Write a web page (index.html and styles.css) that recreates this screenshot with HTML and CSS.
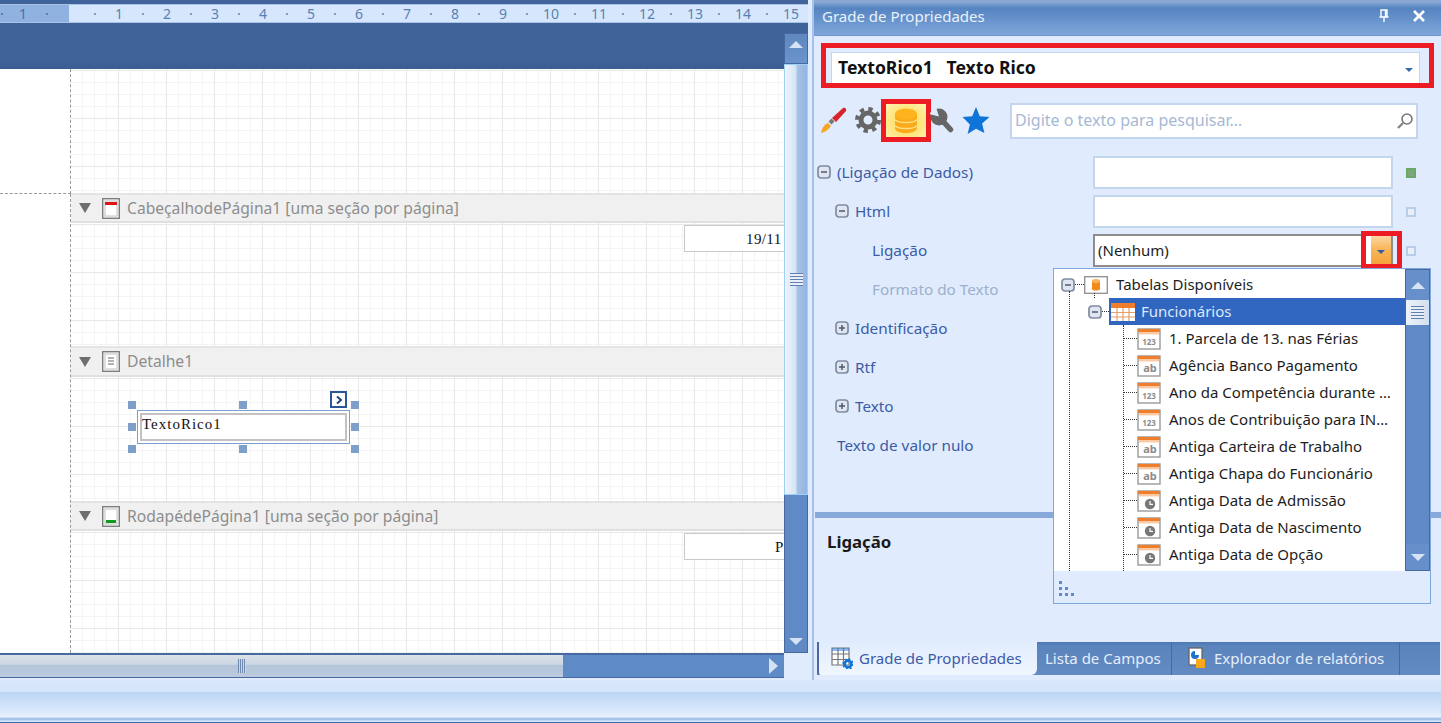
FILE: index.html
```html
<!DOCTYPE html>
<html lang="pt-BR">
<head>
<meta charset="utf-8">
<title>Grade de Propriedades</title>
<link rel="stylesheet" href="styles.css">
</head>
<body>
<svg class="defs" width="0" height="0" aria-hidden="true">
  <defs>
    <symbol id="field-base" viewBox="0 0 24 22">
      <rect x="1" y="1" width="22" height="20" fill="#fff" stroke="#9a9a9a" stroke-width="1.4"/>
      <rect x="1" y="1" width="22" height="3" fill="#ef7f2c"/>
      <rect x="2" y="4" width="20" height="2.4" fill="#f8c9a2"/>
    </symbol>
    <symbol id="field-clock" viewBox="0 0 24 22">
      <use href="#field-base" width="24" height="22"/>
      <circle cx="13" cy="14" r="5.2" fill="#777"/>
      <path d="M13 11v3.3h3" fill="none" stroke="#fff" stroke-width="1.2"/>
    </symbol>
    <symbol id="expander-minus" viewBox="0 0 14 14">
      <rect x="1" y="1" width="12" height="12" rx="3" fill="#dfe6f1" stroke="#7f8ca3" stroke-width="1.7"/>
      <path d="M4 7h6" stroke="#4f5a6e" stroke-width="1.5"/>
    </symbol>
    <symbol id="expander-plus" viewBox="0 0 14 14">
      <rect x="1" y="1" width="12" height="12" rx="3" fill="#dfe6f1" stroke="#7f8ca3" stroke-width="1.7"/>
      <path d="M4 7h6M7 4v6" stroke="#4f5a6e" stroke-width="1.5"/>
    </symbol>
  </defs>
</svg>

<div class="app">
  <div class="workspace">
    <section class="designer">
      <div class="top-strip"></div>
      <div class="ruler">
        <span class="ruler-cell neg ruler-first">·</span><span class="ruler-cell neg">1</span><span class="ruler-cell neg">·</span><span class="ruler-cell"></span>
        <span class="ruler-cell">·</span><span class="ruler-cell">1</span><span class="ruler-cell">·</span><span class="ruler-cell">2</span>
        <span class="ruler-cell">·</span><span class="ruler-cell">3</span><span class="ruler-cell">·</span><span class="ruler-cell">4</span>
        <span class="ruler-cell">·</span><span class="ruler-cell">5</span><span class="ruler-cell">·</span><span class="ruler-cell">6</span>
        <span class="ruler-cell">·</span><span class="ruler-cell">7</span><span class="ruler-cell">·</span><span class="ruler-cell">8</span>
        <span class="ruler-cell">·</span><span class="ruler-cell">9</span><span class="ruler-cell">·</span><span class="ruler-cell">10</span>
        <span class="ruler-cell">·</span><span class="ruler-cell">11</span><span class="ruler-cell">·</span><span class="ruler-cell">12</span>
        <span class="ruler-cell">·</span><span class="ruler-cell">13</span><span class="ruler-cell">·</span><span class="ruler-cell">14</span>
        <span class="ruler-cell">·</span><span class="ruler-cell">15</span>
      </div>
      <div class="designer-body">
        <div class="designer-main">
          <div class="page-band"></div>
          <div class="canvas">
            <div class="margin">
              <div class="margin-top"></div>
              <div class="margin-rest"></div>
            </div>
            <div class="sections">
              <div class="grid grid-top"></div>
              <div class="band">
                <span class="tri"></span>
                <svg class="band-icon" viewBox="0 0 18 21"><rect x=".7" y=".7" width="16.6" height="19.6" fill="#f4f4f4" stroke="#777" stroke-width="1.3"/><rect x="3" y="3" width="12" height="15" fill="#fff" stroke="#c4c4c4"/><rect x="3" y="4" width="12" height="3" fill="#d9161c"/></svg>
                <span class="band-title">CabeçalhodePágina1 [uma seção por página]</span>
              </div>
              <div class="grid grid-side">
                <div class="label-box">19/11</div>
              </div>
              <div class="band band-tall">
                <span class="tri"></span>
                <svg class="band-icon" viewBox="0 0 18 21"><rect x=".7" y=".7" width="16.6" height="19.6" fill="#f4f4f4" stroke="#777" stroke-width="1.3"/><rect x="3" y="3" width="12" height="15" fill="#fff" stroke="#c4c4c4"/><path d="M6 7h6M6 10h6M6 13h6" stroke="#666"/></svg>
                <span class="band-title">Detalhe1</span>
              </div>
              <div class="grid grid-detail">
                <div class="control">
                  <div class="control-inner">TextoRico1</div>
                  <span class="handle h-tl"></span><span class="handle h-tc"></span><span class="handle h-tr"></span>
                  <span class="handle h-ml"></span><span class="handle h-mr"></span>
                  <span class="handle h-bl"></span><span class="handle h-bc"></span><span class="handle h-br"></span>
                  <span class="smart-tag"><svg viewBox="0 0 10 10" width="10" height="10"><path d="M3 1.5 7 5 3 8.500" fill="none" stroke="#23457f" stroke-width="2"/></svg></span>
                </div>
              </div>
              <div class="band">
                <span class="tri"></span>
                <svg class="band-icon" viewBox="0 0 18 21"><rect x=".7" y=".7" width="16.6" height="19.6" fill="#f4f4f4" stroke="#777" stroke-width="1.3"/><rect x="3" y="3" width="12" height="15" fill="#fff" stroke="#c4c4c4"/><rect x="4" y="14" width="10" height="3" fill="#0e9a1c"/></svg>
                <span class="band-title">RodapédePágina1 [uma seção por página]</span>
              </div>
              <div class="grid grid-foot">
                <div class="label-box label-foot">P</div>
              </div>
            </div>
          </div>
          <div class="hscroll">
            <div class="hthumb"><span class="grip-v"></span></div>
            <div class="htrack"><span class="arrow-right"></span></div>
          </div>
        </div>
        <div class="vscroll">
          <div class="vscroll-cap"></div>
          <div class="vbtn vbtn-up"><span class="arrow-up"></span></div>
          <div class="vthumb"><span class="grip-h"></span></div>
          <div class="vtrack"></div>
          <div class="vbtn vbtn-down"><span class="arrow-down"></span></div>
          <div class="vcorner"></div>
        </div>
      </div>
    </section>

    <aside class="panel">
      <header class="panel-title">
        <span class="panel-name">Grade de Propriedades</span>
        <svg class="pin" viewBox="0 0 12 14" width="12" height="14"><path d="M3 1h6v7H3zM1.500 8h9M6 8v5M7.500 1v7" fill="none" stroke="#fff" stroke-width="1.400"/></svg>
        <svg class="close" viewBox="0 0 14 12" width="14" height="12"><path d="M2 1l10 10M12 1 2 11" fill="none" stroke="#fff" stroke-width="2.600"/></svg>
      </header>

      <div class="object-red">
        <div class="object-combo">
          <span class="object-text">TextoRico1&nbsp;&nbsp; Texto Rico</span>
          <span class="combo-arrow"></span>
        </div>
      </div>

      <div class="toolbar">
        <svg class="tool tool-brush" viewBox="0 0 28 28" width="28" height="28"><path d="M1 27c1-6 4-9 7-10l3 3c-2 3-5 6-10 7z" fill="#f5a623"/><path d="M8.500 15.500l3 3 3-3-3-3z" fill="#777"/><path d="M12 12 23 2c2-1 4 1 3 3L16 16z" fill="#d8232a"/></svg>
        <svg class="tool tool-gear" viewBox="0 0 26 26" width="26" height="26"><circle cx="13" cy="13" r="7" fill="none" stroke="#666" stroke-width="5"/><circle cx="13" cy="13" r="11" fill="none" stroke="#666" stroke-width="4" stroke-dasharray="4.300 4.340"/></svg>
        <div class="tool-db">
          <svg viewBox="0 0 24 26" width="24" height="26"><path d="M1 6v14c0 3 5 5 11 5s11-2 11-5V6z" fill="#fbab18"/><ellipse cx="12" cy="6" rx="11" ry="5.500" fill="#ffb31c"/><path d="M1 11.500c2 4 20 4 22 0M1 17.500c2 4 20 4 22 0" fill="none" stroke="#ffe08a" stroke-width="1.600"/></svg>
        </div>
        <svg class="tool tool-wrench" viewBox="0 0 24 25" width="24" height="25"><circle cx="9" cy="9" r="8.500" fill="#666"/><path d="M9 9 20.500 21.500" stroke="#666" stroke-width="5.500" stroke-linecap="round"/><path d="M9 8.500-1 6 6-1z" fill="#e0ecfd"/></svg>
        <svg class="tool tool-star" viewBox="0 0 28 28" width="28" height="28"><path d="M14 1l3.800 9.200 9.700.8-7.400 6.400 2.300 9.600L14 22.800 5.600 28l2.300-9.600L.5 11l9.700-.8z" fill="#0f74d8"/></svg>
        <div class="search">
          <span class="search-hint">Digite o texto para pesquisar…</span>
          <svg viewBox="0 0 18 18" width="18" height="18"><circle cx="11" cy="7" r="5" fill="#fff" stroke="#777" stroke-width="1.600"/><path d="M7 11 2 16" stroke="#888" stroke-width="2.400"/></svg>
        </div>
      </div>

      <div class="props">
        <div class="prop">
          <div class="prop-label"><svg class="exp"><use href="#expander-minus"/></svg>(Ligação de Dados)</div>
          <div class="prop-value"></div>
          <span class="marker marker-on"></span>
        </div>
        <div class="prop">
          <div class="prop-label lvl1"><svg class="exp"><use href="#expander-minus"/></svg>Html</div>
          <div class="prop-value"></div>
          <span class="marker"></span>
        </div>
        <div class="prop">
          <div class="prop-label lvl2">Ligação</div>
          <div class="prop-value prop-active">
            <span class="prop-text">(Nenhum)</span>
            <span class="drop-btn"><span class="drop-arrow"></span></span>
            <span class="drop-red"></span>
          </div>
          <span class="marker"></span>
        </div>
        <div class="prop">
          <div class="prop-label lvl2 disabled">Formato do Texto</div>
        </div>
        <div class="prop">
          <div class="prop-label lvl1"><svg class="exp"><use href="#expander-plus"/></svg>Identificação</div>
        </div>
        <div class="prop">
          <div class="prop-label lvl1"><svg class="exp"><use href="#expander-plus"/></svg>Rtf</div>
        </div>
        <div class="prop">
          <div class="prop-label lvl1"><svg class="exp"><use href="#expander-plus"/></svg>Texto</div>
        </div>
        <div class="prop">
          <div class="prop-label lvl3">Texto de valor nulo</div>
        </div>
      </div>

      <div class="splitter"></div>
      <div class="description"><strong>Ligação</strong></div>

      <nav class="tabs">
        <div class="tab tab-active">
          <svg viewBox="0 0 22 22" width="22" height="22"><path d="M1 1h17v17H1zM1 7h17M1 12.500h17M7 1v17M12.500 1v17" fill="#fff" stroke="#777" stroke-width="1.200"/><path d="M1 1h17v3H1z" fill="#2b78d4" opacity=".5"/><circle cx="17" cy="17" r="3.300" fill="none" stroke="#0f74d8" stroke-width="2.600"/><circle cx="17" cy="17" r="5" fill="none" stroke="#0f74d8" stroke-width="1.500" stroke-dasharray="2 1.900"/></svg>
          <span>Grade de Propriedades</span>
        </div>
        <div class="tab tab-fields"><span>Lista de Campos</span></div>
        <div class="tab tab-explorer">
          <svg viewBox="0 0 18 22" width="18" height="22"><rect x="1" y="1" width="13" height="17" fill="#fff" stroke="#666" stroke-width="1.300"/><path d="M7 4a4 4 0 1 0 4 4H7z" fill="#1d6fd0"/><rect x="8" y="12" width="9" height="9" fill="#f8a818"/></svg>
          <span>Explorador de relatórios</span>
        </div>
      </nav>
    </aside>
  </div>
  <footer class="statusbar"></footer>

  <div class="dropdown">
    <div class="dropdown-body">
      <div class="tree">
        <span class="dots v1"></span>
        <span class="dots v2"></span>
        <span class="dots v3"></span>
        <div class="node node-root">
          <svg class="exp"><use href="#expander-minus"/></svg>
          <span class="dots-h short"></span>
          <svg class="root-icon" viewBox="0 0 24 18" width="24" height="18"><rect x=".7" y=".7" width="22.600" height="16.600" fill="#fff" stroke="#8f8f8f" stroke-width="1.300"/><path d="M8 5v8c0 2 8 2 8 0V5z" fill="#f28a1c"/><ellipse cx="12" cy="5" rx="4" ry="2" fill="#f9b35f"/></svg>
          <span class="node-text">Tabelas Disponíveis</span>
        </div>
        <div class="node node-table">
          <svg class="exp"><use href="#expander-minus"/></svg>
          <span class="dots-h short"></span>
          <span class="node-sel">
            <svg viewBox="0 0 24 18" width="24" height="18"><rect width="24" height="18" fill="#fff"/><rect width="24" height="5" fill="#ef7f2c"/><path d="M0 9.500h24M0 14h24M6 5v13M12 5v13M18 5v13" stroke="#e3a06c" stroke-width="1.200"/></svg>
            <span class="node-text">Funcionários</span>
          </span>
        </div>
        <div class="node node-field"><span class="dots-h"></span><svg class="ficon" viewBox="0 0 24 22"><use href="#field-base" width="24" height="22"/><text x="12" y="17" class="ftext">123</text></svg><span class="node-text">1. Parcela de 13. nas Férias</span></div>
        <div class="node node-field"><span class="dots-h"></span><svg class="ficon" viewBox="0 0 24 22"><use href="#field-base" width="24" height="22"/><text x="13" y="17" class="ftext ftext-ab">ab</text></svg><span class="node-text">Agência Banco Pagamento</span></div>
        <div class="node node-field"><span class="dots-h"></span><svg class="ficon" viewBox="0 0 24 22"><use href="#field-base" width="24" height="22"/><text x="12" y="17" class="ftext">123</text></svg><span class="node-text">Ano da Competência durante …</span></div>
        <div class="node node-field"><span class="dots-h"></span><svg class="ficon" viewBox="0 0 24 22"><use href="#field-base" width="24" height="22"/><text x="12" y="17" class="ftext">123</text></svg><span class="node-text">Anos de Contribuição para IN…</span></div>
        <div class="node node-field"><span class="dots-h"></span><svg class="ficon" viewBox="0 0 24 22"><use href="#field-base" width="24" height="22"/><text x="13" y="17" class="ftext ftext-ab">ab</text></svg><span class="node-text">Antiga Carteira de Trabalho</span></div>
        <div class="node node-field"><span class="dots-h"></span><svg class="ficon" viewBox="0 0 24 22"><use href="#field-base" width="24" height="22"/><text x="13" y="17" class="ftext ftext-ab">ab</text></svg><span class="node-text">Antiga Chapa do Funcionário</span></div>
        <div class="node node-field"><span class="dots-h"></span><svg class="ficon"><use href="#field-clock"/></svg><span class="node-text">Antiga Data de Admissão</span></div>
        <div class="node node-field"><span class="dots-h"></span><svg class="ficon"><use href="#field-clock"/></svg><span class="node-text">Antiga Data de Nascimento</span></div>
        <div class="node node-field"><span class="dots-h"></span><svg class="ficon"><use href="#field-clock"/></svg><span class="node-text">Antiga Data de Opção</span></div>
      </div>
      <div class="dd-scroll">
        <div class="dd-btn"><span class="arrow-up"></span></div>
        <div class="dd-thumb"><span class="grip-h"></span></div>
        <div class="dd-track"></div>
        <div class="dd-btn"><span class="arrow-down"></span></div>
      </div>
    </div>
    <div class="dd-footer">
      <svg viewBox="0 0 16 16" width="16" height="16"><path d="M0 1h3v3H0zM0 7h3v3H0zM6 7h3v3H6zM0 13h3v3H0zM6 13h3v3H6zM12 13h3v3h-3z" fill="#5f8bc8"/></svg>
    </div>
  </div>
</div>
</body>
</html>
```

FILE: styles.css
```css
* { box-sizing: border-box; }
html, body { margin: 0; padding: 0; }
body {
  width: 1441px;
  height: 723px;
  overflow: hidden;
  font-family: "Noto Sans", "Open Sans", sans-serif;
  font-size: 15px;
  color: #1d1d1d;
  background: #e0ecfd;
}
.defs { position: absolute; }
.app { position: relative; width: 1441px; height: 723px; display: flex; flex-direction: column; overflow: hidden; }
.workspace { display: flex; height: 680px; }

/* designer */
.designer { width: 808px; display: flex; flex-direction: column; }
.top-strip { height: 5px; background: #40639a; border-bottom: 1px solid #a9c3e6; }
.ruler {
  height: 18px;
  display: flex;
  background: linear-gradient(90deg, #8fb2e0 0, #8fb2e0 69px, #d6e7fd 69px);
  border-bottom: 1px solid #a9c3e6;
  color: #5b7fb0;
  font-size: 14px;
  line-height: 17px;
  overflow: hidden;
}
.ruler-cell { flex: 0 0 24px; text-align: center; white-space: nowrap; }
.ruler-cell.neg { color: #4a6fa5; }
.ruler-first { flex-basis: 11px; text-align: left; }
.designer-body { flex: 1; display: flex; }
.designer-main { width: 784px; display: flex; flex-direction: column; }
.page-band { height: 46px; background: linear-gradient(#40639a 0, #40639a 80%, #3b5c91 100%); }
.canvas { height: 584px; display: flex; background: #fff; }
.margin { width: 71px; flex: none; display: flex; flex-direction: column; }
.margin-top { height: 125px; border-right: 1px dashed #999; border-bottom: 1px dashed #999; }
.margin-rest { flex: 1; border-right: 1px dashed #999; }
.sections { flex: 1; min-width: 0; display: flex; flex-direction: column; overflow: hidden; }
.grid {
  background-color: #fff;
  background-image:
    linear-gradient(#e8e8e8 1px, transparent 1px),
    linear-gradient(90deg, #e8e8e8 1px, transparent 1px),
    linear-gradient(#f4f4f4 1px, transparent 1px),
    linear-gradient(90deg, #f4f4f4 1px, transparent 1px);
  background-size: 48px 48px, 48px 48px, 12px 12px, 12px 12px;
  background-position: 0 1px, -1px 0, 0 1px, -1px 0;
}
.grid-top { height: 124px; }
.grid-side { height: 123px; padding-top: 2px; }
.grid-detail { height: 124px; padding: 33px 0 0 66px; }
.grid-foot { height: 122px; padding-top: 2px; }
.band {
  height: 30px;
  flex: none;
  display: flex;
  align-items: center;
  background: #f0f0f0;
  border-top: 2px solid #e4e4e4;
  border-bottom: 2px solid #e0e0e0;
  color: #8d8d8d;
  font-size: 15.65px;
}
.band-tall { height: 31px; }
.band-title { margin-left: 7px; padding-bottom: 1px; white-space: nowrap; }
.tri {
  width: 0; height: 0;
  margin-left: 8px;
  border-left: 6px solid transparent;
  border-right: 6px solid transparent;
  border-top: 10px solid #6e6e6e;
}
.band-icon { width: 18px; height: 21px; margin-left: 11px; flex: none; }
.label-box {
  margin-left: 613px;
  width: 120px;
  height: 27px;
  padding-left: 61px;
  background: #fff;
  border: 1px solid #c9c9c9;
  font-family: "Liberation Serif", serif;
  font-size: 15px;
  line-height: 26px;
  letter-spacing: .4px;
  color: #111;
}
.label-foot { padding-left: 90px; }

.control {
  position: relative;
  width: 213px;
  height: 34px;
  border: 1px solid #7b9fd0;
  padding: 2px;
  background: #fff;
}
.control-inner {
  height: 100%;
  border: 2px solid #c2c2c2;
  font-family: "Liberation Serif", serif;
  font-size: 15px;
  letter-spacing: 1px;
  line-height: 19px;
  color: #111;
  white-space: nowrap;
}
.handle { position: absolute; width: 8px; height: 8px; background: #7f9fcb; }
.h-tl { left: -10px; top: -10px; }
.h-tc { left: 101px; top: -10px; }
.h-tr { right: -10px; top: -10px; }
.h-ml { left: -10px; top: 12px; }
.h-mr { right: -10px; top: 12px; }
.h-bl { left: -10px; bottom: -10px; }
.h-bc { left: 101px; bottom: -10px; }
.h-br { right: -10px; bottom: -10px; }
.smart-tag {
  position: absolute;
  right: 2px;
  top: -20px;
  width: 17px;
  height: 17px;
  display: flex;
  align-items: center;
  justify-content: center;
  background: #fff;
  border: 2px solid #2a5596;
}

/* scrollbars */
.hscroll { height: 25px; flex: none; display: flex; border-top: 2px solid #47699f; border-bottom: 1px solid #47699f; }
.hthumb {
  width: 563px;
  display: flex;
  align-items: center;
  justify-content: center;
  background: linear-gradient(#dbe2ea 0, #cdd7e2 42%, #b4c5da 47%, #bccbdd 100%);
}
.htrack { flex: 1; display: flex; align-items: center; justify-content: flex-end; padding-right: 6px; background: #5e8ac6; }
.grip-v {
  display: block;
  width: 8px;
  height: 14px;
  margin-left: -79px;
  background: repeating-linear-gradient(90deg, #6d88ad 0 1px, #cfd9e6 1px 2px);
}
.arrow-right { width: 0; height: 0; border-top: 8px solid transparent; border-bottom: 8px solid transparent; border-left: 9px solid #d3e1f3; }
.vscroll { width: 24px; display: flex; flex-direction: column; }
.vscroll-cap { height: 10px; background: #40639a; flex: none; }
.vbtn {
  flex: none;
  display: flex;
  align-items: center;
  justify-content: center;
  background: linear-gradient(#5f87c0, #6b93cc);
  border: 1px solid #47699f;
}
.vbtn-up { height: 31px; padding-bottom: 9px; }
.vbtn-down { height: 23px; background: #5f8ac6; border-top: 0; }
.vthumb {
  flex: none;
  height: 431px;
  display: flex;
  align-items: center;
  justify-content: center;
  background: linear-gradient(90deg, #eef4fc 0, #d5e3f5 50%, #a6c2e6 55%, #93b5e2 100%);
  border: 1px solid #9dd0f2;
}
.vtrack { height: 135px; flex: none; background: #5f8ac6; border-left: 1px solid #47699f; border-right: 1px solid #47699f; }
.vcorner { flex: 1; background: #e0ecfd; }
.arrow-up { width: 0; height: 0; border-left: 7px solid transparent; border-right: 7px solid transparent; border-bottom: 7px solid #d5e3f5; }
.arrow-down { width: 0; height: 0; border-left: 7px solid transparent; border-right: 7px solid transparent; border-top: 7px solid #d5e3f5; }
.grip-h {
  display: block;
  width: 13px;
  height: 13px;
  background: repeating-linear-gradient(#5f7fae 0 1px, #e8eff8 1px 3px);
}

/* panel */
.panel { width: 629px; margin-left: 4px; display: flex; flex-direction: column; border-left: 2px solid #a5c2e8; background: #e0ecfd; }
.panel-title {
  flex: none;
  height: 36px;
  display: flex;
  align-items: center;
  padding: 0 15px 3px 8px;
  background: linear-gradient(#8aa8d2 0, #8aa8d2 2px, #5584c1 8px, #7fa6da 100%);
  border-bottom: 1px solid #6f97cc;
  color: #e9f1fb;
  font-size: 15px;
}
.panel-name { flex: 1; }
.pin { margin-right: 22px; }

.object-red {
  flex: none;
  margin: 7px 7px 0 7px;
  height: 45px;
  padding: 4px 9px 0 5px;
  border: 5px solid #ed1c24;
  display: flex;
  background: #e0ecfd;
}
.object-combo {
  flex: 1;
  display: flex;
  align-items: center;
  justify-content: space-between;
  padding: 0 6px 2px;
  background: #fff;
  border: 1px solid #c4d6ee;
  border-bottom: 0;
}
.object-text { font-weight: 700; font-size: 17.6px; color: #111; white-space: pre; }
.combo-arrow { width: 0; height: 0; margin-top: 5px; border-left: 4px solid transparent; border-right: 4px solid transparent; border-top: 4px solid #3b68ad; }

.toolbar { flex: none; height: 43px; margin-top: 11px; display: flex; align-items: center; padding-left: 6px; }
.tool { flex: none; }
.tool-brush { margin-top: -2px; }
.tool-gear { margin-left: 7px; margin-top: -1px; }
.tool-db {
  flex: none;
  width: 50px;
  height: 43px;
  border: 5px solid #ed1c24;
  display: flex;
  align-items: center;
  justify-content: center;
  background: radial-gradient(ellipse at 50% 55%, #ffdc5e 0, #ffe680 55%, #fdf3b8 100%);
}
.tool-wrench { margin-left: -1px; margin-top: -1px; }
.tool-star { margin-left: 8px; margin-top: -2px; }
.search {
  flex: none;
  width: 408px;
  height: 36px;
  margin-left: 20px;
  display: flex;
  align-items: center;
  justify-content: space-between;
  padding: 0 2px 2px 3px;
  background: #fff;
  border: 2px solid #c4d6ee;
}
.search-hint { color: #a6b9d3; font-size: 16px; }
.search svg { margin-top: 2px; }

.props { flex: none; margin-top: 11px; padding-left: 3px; }
.prop { height: 39px; display: flex; align-items: center; }
.prop-label { width: 276px; display: flex; align-items: center; padding-bottom: 2px; color: #3c5ba6; font-size: 15.3px; white-space: nowrap; }
.exp { width: 14px; height: 14px; flex: none; margin-right: 6px; }
.lvl1 { padding-left: 18px; }
.lvl2 { padding-left: 55px; }
.lvl3 { padding-left: 20px; }
.disabled { color: #9cb0cd; }
.prop-value {
  position: relative;
  width: 300px;
  height: 33px;
  background: #fff;
  border: 2px solid #c4d6ee;
  display: flex;
  align-items: center;
}
.prop-active { border-color: #8d8d8d; }
.prop-text { padding: 0 0 2px 3px; color: #1d1d1d; }
.drop-btn {
  position: absolute;
  right: 0;
  top: 0;
  bottom: 0;
  width: 20px;
  display: flex;
  align-items: center;
  justify-content: center;
  background: linear-gradient(#fbd7a3, #f8b659 45%, #f5a23a);
}
.drop-arrow { width: 0; height: 0; margin-top: 3px; border-left: 4px solid transparent; border-right: 4px solid transparent; border-top: 4px solid #2f5fa8; }
.drop-red {
  position: absolute;
  right: -11px;
  top: -5px;
  width: 41px;
  height: 38px;
  border: 5px solid #ed1c24;
}
.marker { width: 10px; height: 10px; margin-left: 13px; border: 2px solid #b9cde8; background: #e7eff9; }
.marker-on { border-color: #6aa768; background: #7ba77a; }

.splitter { flex: none; height: 6px; margin-top: 47px; background: #86a9da; margin-left: 1px; }
.description { flex: 1; padding: 12px 13px 0; color: #1a1a1a; font-size: 16.8px; }

.tabs {
  flex: none;
  height: 33px;
  margin: 0 1px 5px 3px;
  display: flex;
  align-items: center;
  background: linear-gradient(#4d78b2 0, #5b84bd 4px, #628bc4 100%);
  color: #e6eefa;
}
.tab { height: 100%; display: flex; align-items: center; padding-bottom: 1px; white-space: nowrap; }
.tab-active {
  width: 220px;
  padding-left: 12px;
  gap: 6px;
  background: linear-gradient(#e0ecfd, #f1f6fe);
  border-left: 2px solid #47699f;
  border-radius: 0 0 6px 3px;
  color: #3c5ba6;
}
.tab-fields { width: 135px; padding-left: 8px; border-right: 1px solid #47699f; }
.tab-explorer { width: 228px; padding-left: 16px; gap: 8px; border-right: 1px solid #47699f; }

.statusbar {
  flex: 1;
  background: linear-gradient(#d9e7fb 0, #d5e5fa 27%, #bcd5f5 28%, #dcebfc 77%, #eaf2fd 86%, #a5c2e8 89%, #a5c2e8 93%, #d5e5fa 95%, #d5e5fa 97%, #3f6ba5 98%);
}

/* dropdown */
.dropdown {
  position: absolute;
  left: 1053px;
  top: 268px;
  width: 378px;
  height: 336px;
  display: flex;
  flex-direction: column;
  background: #e0ecfd;
  border: 1px solid #7ca8de;
}
.dropdown-body { height: 302px; flex: none; display: flex; }
.tree { position: relative; width: 351px; flex: none; padding-top: 2px; background: #fff; overflow: hidden; }
.node { height: 27px; display: flex; align-items: center; white-space: nowrap; color: #1d1d1d; }
.node-root { padding-left: 7px; }
.node-root .exp, .node-table .exp { margin-right: 0; }
.node-table { padding-left: 34px; }
.node-field { padding-left: 70px; }
.node-text { margin-left: 8px; padding-bottom: 2px; }
.dots-h { display: block; width: 13px; border-top: 1px dotted #333; }
.dots-h.short { width: 8px; }
.node-root .dots-h.short { width: 9px; }
.node-table .dots-h.short { width: 7px; flex: none; }
.node-sel {
  flex: 1;
  height: 27px;
  display: flex;
  align-items: center;
  padding-left: 2px;
  background: #3166c0;
  color: #dce9fb;
}
.node-sel .node-text { margin-left: 6px; }
.ficon { width: 24px; height: 22px; flex: none; }
.root-icon { flex: none; }
.ftext { font-family: "Noto Sans", sans-serif; font-size: 8px; font-weight: 700; fill: #8c8c8c; text-anchor: middle; }
.ftext-ab { font-size: 11px; }
.dots { position: absolute; width: 0; border-left: 1px dotted #333; }
.v1 { left: 15px; top: 22px; bottom: 0; }
.v2 { left: 40px; top: 24px; height: 5px; }
.v3 { left: 69px; top: 56px; bottom: 0; }
.dd-scroll { flex: 1; display: flex; flex-direction: column; border: 1px solid #47699f; background: #5f8ac6; }
.dd-btn { height: 30px; flex: none; display: flex; align-items: center; justify-content: center; background: #6790ca; }
.dd-scroll .dd-btn:last-child { height: 26px; }
.dd-thumb { height: 25px; flex: none; display: flex; align-items: center; justify-content: center; background: linear-gradient(90deg, #eef3fa, #d3dfee); }
.dd-track { flex: 1; }
.dd-footer { flex: 1; display: flex; align-items: flex-end; padding: 0 0 7px 5px; }
```
